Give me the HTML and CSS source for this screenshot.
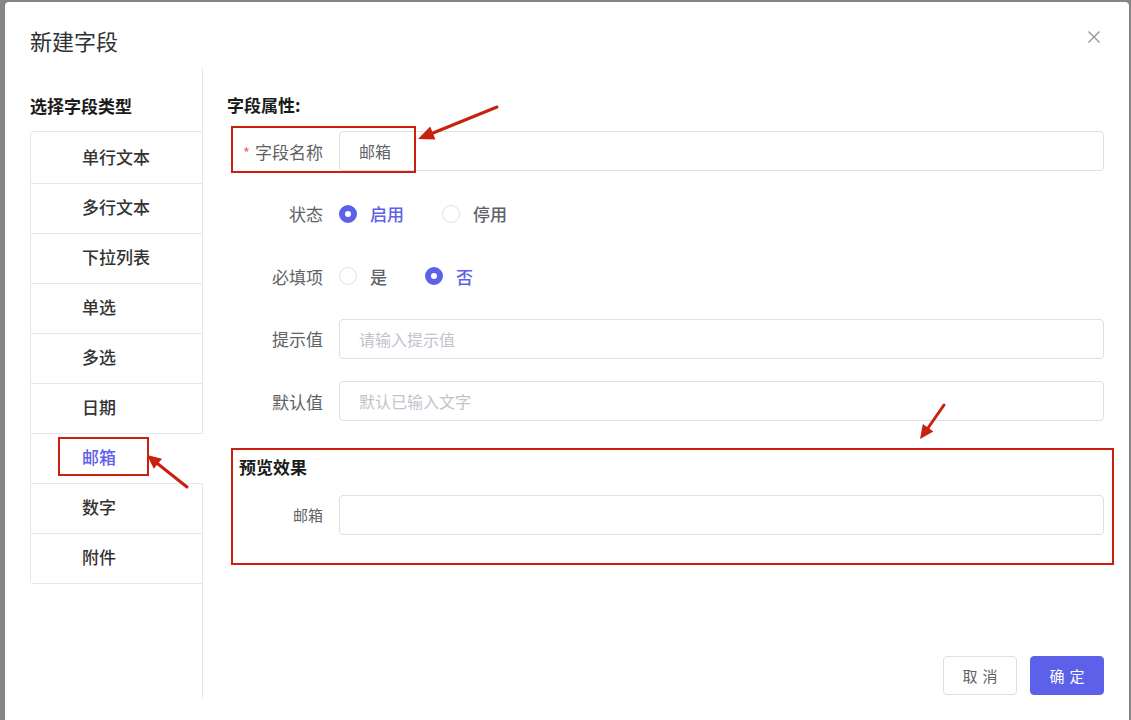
FILE: index.html
```html
<!DOCTYPE html>
<html>
	<head>
		<meta charset="UTF-8" />
		<title>新建字段</title>
		<link rel="stylesheet" href="styles.css">
	</head>

	<body>
		<div class="dialog">
			<div class="dialog-header">
				<span class="dialog-title">新建字段</span>
				<span class="dialog-close">
					<svg width="12" height="12" viewBox="0 0 12 12"><path d="M0.5 0.5 L11.5 11.5 M11.5 0.5 L0.5 11.5" stroke="#909399" stroke-width="1.3" fill="none"/></svg>
				</span>
			</div>

			<div class="dialog-body">
				<div class="type-col">
					<p class="section-title">选择字段类型</p>
					<ul class="type-list">
						<li>单行文本</li>
						<li>多行文本</li>
						<li>下拉列表</li>
						<li>单选</li>
						<li>多选</li>
						<li>日期</li>
						<li class="active">邮箱</li>
						<li>数字</li>
						<li>附件</li>
					</ul>
				</div>

				<div class="prop-col">
					<p class="section-title">字段属性:</p>

					<div class="form-row">
						<label class="form-label"><span class="req">*</span>字段名称</label>
						<input class="form-input" value="邮箱">
					</div>

					<div class="form-row">
						<label class="form-label">状态</label>
						<span class="radio checked"><i></i>启用</span>
						<span class="radio"><i></i>停用</span>
					</div>

					<div class="form-row">
						<label class="form-label">必填项</label>
						<span class="radio"><i></i>是</span>
						<span class="radio checked"><i></i>否</span>
					</div>

					<div class="form-row">
						<label class="form-label">提示值</label>
						<input class="form-input" placeholder="请输入提示值">
					</div>

					<div class="form-row">
						<label class="form-label">默认值</label>
						<input class="form-input" placeholder="默认已输入文字">
					</div>

					<div class="preview">
						<p class="section-title">预览效果</p>
						<div class="form-row small">
							<label class="form-label">邮箱</label>
							<input class="form-input">
						</div>
					</div>

					<div class="dialog-footer">
						<button class="btn">取消</button>
						<button class="btn primary">确定</button>
					</div>
				</div>
			</div>
		</div>

		<!-- annotation marks drawn over the screenshot -->
		<svg class="marks" width="1131" height="720" viewBox="0 0 1131 720">
			<g fill="none" stroke="#c8220f" stroke-width="2">
				<rect x="232" y="127" width="183" height="45"/>
				<rect x="59" y="438" width="89" height="37"/>
				<rect x="232" y="449" width="881" height="115"/>
			</g>
			<g stroke="#c8220f" stroke-width="3" stroke-linecap="round">
				<line x1="497" y1="107" x2="433" y2="133"/>
				<line x1="187" y1="487" x2="158" y2="464"/>
				<line x1="944" y1="405" x2="928" y2="428"/>
			</g>
			<g fill="#c8220f">
				<polygon points="418,139 435.4,139.5 430.2,126.5"/>
				<polygon points="147,455 162,458.7 153.8,468.8"/>
				<polygon points="920,439 922.8,423.9 933.4,431.4"/>
			</g>
		</svg>
	</body>
</html>
```

FILE: styles.css
```css
html, body {
	margin:0px; padding:0px;
	width:100%; height:100%;
}

body {
	position:relative;
	overflow:hidden;
	background:#858585;
	font-family:"Noto Sans CJK SC", "Noto Sans", sans-serif;
	color:#606266;
}

p { margin:0px }

.dialog {
	box-sizing:border-box;
	width:1124px; height:718px;
	margin:2px 0px 0px 5px;
	padding:0px 25px;
	background:#fff;
	border-radius:4px 4px 0px 0px;
}

.dialog-header {
	box-sizing:border-box;
	height:66px;
	padding-top:23px;
	display:flex;
	justify-content:space-between;
	align-items:flex-start;
}
.dialog-title { font-size:22px; line-height:30px; color:#303133 }
.dialog-close { width:12px; height:12px; margin:6px 4px 0px 0px; display:flex }

.dialog-body { display:flex; height:630px }

.section-title {
	font-size:17px; line-height:24px;
	font-weight:700; color:#1a1a1a;
}

/* left column: field types */
.type-col {
	width:172px;
	flex-shrink:0;
	border-right:1px solid #e4e7ed;
}
.type-col .section-title { margin:26px 0px 13px }

.type-list {
	list-style:none;
	margin:0px; padding:2px 0px 0px;
	border:1px solid #e4e7ed; border-right:none;
	border-radius:4px 0px 0px 4px;
}
.type-list li {
	box-sizing:border-box;
	height:50px;
	padding-left:51px;
	line-height:46px;
	font-size:17px; font-weight:500; color:#333;
	border-bottom:1px solid #e4e7ed;
	background:#fff;
}
.type-list li:last-child { border-bottom:none; height:49px }
.type-list li.active {
	color:#5d60e9;
	margin-right:-1px; /* hides the divider behind the active tab */
}

/* right column: properties */
.prop-col {
	flex:1;
	padding-left:24px;
	display:flex;
	flex-direction:column;
}
.prop-col > .section-title { margin:25px 0px 14px }

.form-row {
	display:flex;
	align-items:center;
	height:40px;
	margin-bottom:22.5px;
}
.form-label {
	box-sizing:border-box;
	width:112px;
	flex-shrink:0;
	padding-right:16px;
	text-align:right;
	font-size:17px;
	color:#606266;
}
.req { color:#f56c6c; margin-right:5px; font-size:15px }

.form-input {
	box-sizing:border-box;
	flex:1;
	height:40px;
	padding:0px 19px;
	border:1px solid #dcdfe6;
	border-radius:4px;
	font-family:inherit;
	font-size:16px;
	color:#606266;
	outline:none;
}
.form-input::placeholder { color:#c0c4cc }

.radio {
	display:flex;
	align-items:center;
	margin-right:38px;
	font-size:17px; font-weight:500; color:#606266;
}
.radio i {
	box-sizing:border-box;
	width:18px; height:18px;
	margin-right:13px;
	border:1px solid #dcdfe6;
	border-radius:50%;
	background:#fff;
}
.radio.checked { color:#5d60e9 }
.radio.checked i {
	border:6px solid #5d60e9;
}

.preview { padding:11px 0px 0px 12px }
.preview .section-title { margin-bottom:16px }
.preview .form-label { width:100px; font-size:15px }

.dialog-footer {
	margin-top:auto;
	padding-bottom:3px;
	display:flex;
	justify-content:flex-end;
	gap:13px;
}
.btn {
	width:74px; height:39px;
	border:1px solid #dcdfe6;
	border-radius:4px;
	background:#fff;
	font-family:inherit;
	font-size:15px;
	letter-spacing:5px;
	text-indent:5px;
	color:#606266;
}
.btn.primary { background:#5d60e9; border-color:#5d60e9; color:#fff }

.marks { position:absolute; left:0px; top:0px; pointer-events:none }
```
